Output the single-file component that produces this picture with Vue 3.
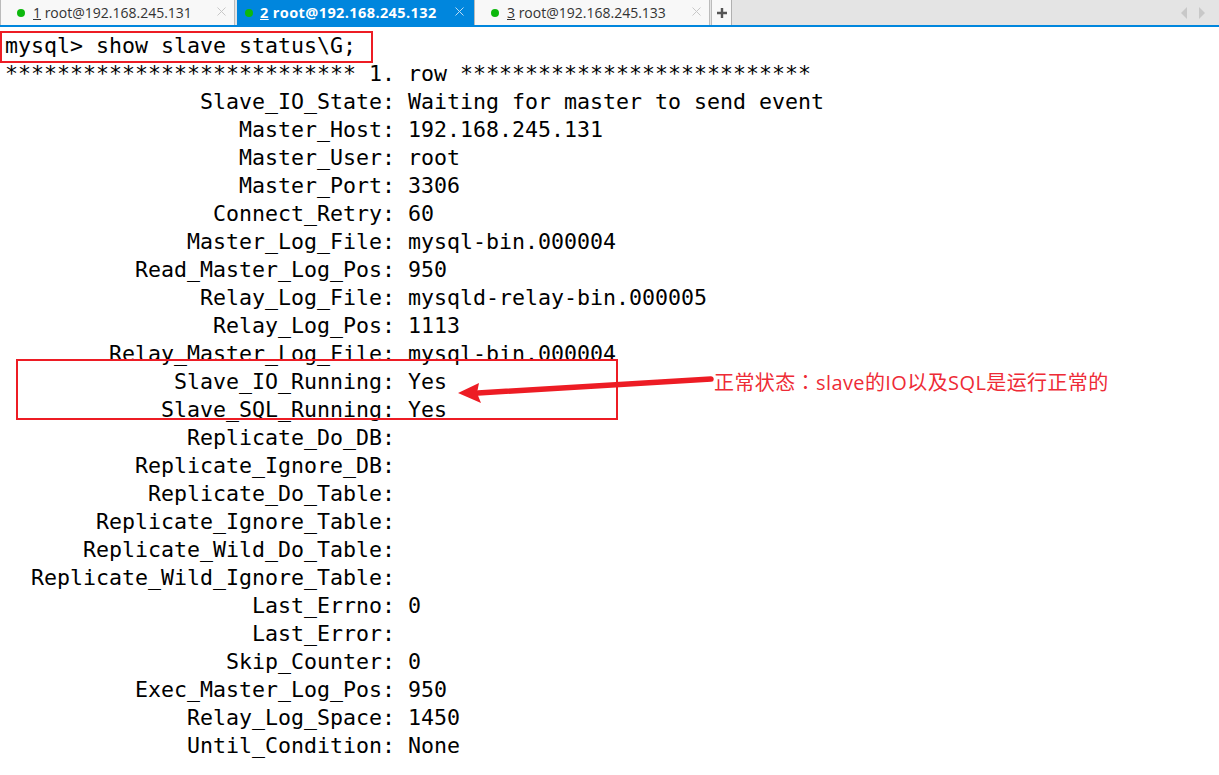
<script setup>
const tabs = [
  { num: '1', host: 'root@192.168.245.131', active: false },
  { num: '2', host: 'root@192.168.245.132', active: true },
  { num: '3', host: 'root@192.168.245.133', active: false }
]
const rows = [
  ['Slave_IO_State', 'Waiting for master to send event'],
  ['Master_Host', '192.168.245.131'],
  ['Master_User', 'root'],
  ['Master_Port', '3306'],
  ['Connect_Retry', '60'],
  ['Master_Log_File', 'mysql-bin.000004'],
  ['Read_Master_Log_Pos', '950'],
  ['Relay_Log_File', 'mysqld-relay-bin.000005'],
  ['Relay_Log_Pos', '1113'],
  ['Relay_Master_Log_File', 'mysql-bin.000004'],
  ['Slave_IO_Running', 'Yes'],
  ['Slave_SQL_Running', 'Yes'],
  ['Replicate_Do_DB', ''],
  ['Replicate_Ignore_DB', ''],
  ['Replicate_Do_Table', ''],
  ['Replicate_Ignore_Table', ''],
  ['Replicate_Wild_Do_Table', ''],
  ['Replicate_Wild_Ignore_Table', ''],
  ['Last_Errno', '0'],
  ['Last_Error', ''],
  ['Skip_Counter', '0'],
  ['Exec_Master_Log_Pos', '950'],
  ['Relay_Log_Space', '1450'],
  ['Until_Condition', 'None']
]
const stars = '*'.repeat(27)
const lines = [
  'mysql> show slave status\\G;',
  `${stars} 1. row ${stars}`,
  ...rows.map(([k, v]) => `${(k + ':').padStart(30)} ${v}`)
]
</script>

<template>
  <div class="screen">
    <div class="tabbar">
      <div v-for="t in tabs" :key="t.num" class="tab" :class="{ active: t.active }">
        <span class="dot"></span>
        <span class="label"><u>{{ t.num }}</u> {{ t.host }}</span>
        <svg class="close" width="9" height="9" viewBox="0 0 9 9"><path d="M0.5 0.5L8.5 8.5M8.5 0.5L0.5 8.5" fill="none" stroke-width="1" /></svg>
      </div>
      <div class="add">
        <svg width="10" height="10" viewBox="0 0 10 10"><path d="M0 5H10M5 0V10" stroke="#555" stroke-width="2.4" fill="none" /></svg>
      </div>
      <div class="nav">
        <svg width="6" height="12" viewBox="0 0 6 12"><path d="M6 0V12L0 6Z" fill="#c8c8c8" /></svg>
        <svg width="6" height="12" viewBox="0 0 6 12"><path d="M0 0V12L6 6Z" fill="#c8c8c8" /></svg>
      </div>
    </div>
    <div class="terminal">
      <div v-for="(l, i) in lines" :key="i" class="line">{{ l }}</div>
      <div class="box box-cmd"></div>
      <div class="box box-run"></div>
      <svg class="arrow" width="260" height="40" viewBox="0 0 260 40">
        <path d="M255 10 L22 24" stroke="#ed1c24" stroke-width="5.5" stroke-linecap="round" fill="none" />
        <path d="M2 24 L23 14 L21 24 L25 34 Z" fill="#ed1c24" />
      </svg>
      <div class="note">正常状态<span class="colon">：</span>slave的IO以及SQL是运行正常的</div>
    </div>
  </div>
</template>

<style scoped>
.screen {
  width: 1219px;
  height: 775px;
  overflow: hidden;
  background: #fff;
  display: flex;
  flex-direction: column;
}
.tabbar {
  height: 25px;
  background: #e4e4e4;
  display: flex;
  align-items: stretch;
  border-bottom: 2px solid #0086dd;
  flex: none;
  box-sizing: content-box;
}
.tab {
  width: 235px;
  background: #f8f8f8;
  border-left: 1px solid #bbb;
  border-right: 1px solid #bbb;
  box-sizing: border-box;
  display: flex;
  align-items: center;
  padding-left: 16px;
  font: 14px "Open Sans", "Liberation Sans", sans-serif;
  color: #333;
  position: relative;
}
.tab:nth-child(3) { width: 236px; }
.tab.active {
  width: 237px;
  margin-left: 2px;
  background: #0086dd;
  color: #fff;
  font-size: 14.5px;
  font-weight: 700;
  letter-spacing: 0.4px;
  padding-left: 8px;
  border: none;
}
.dot {
  width: 8px;
  height: 8px;
  border-radius: 50%;
  background: #0db80d;
  margin-right: 8px;
  flex: none;
}
.active .dot { margin-right: 7px; }
.label { white-space: pre; }
.close {
  position: absolute;
  right: 8px;
  top: 7px;
  stroke: #c8c8c8;
}
.active .close { stroke: #bcdcf4; right: 10px; }
.add {
  width: 21px;
  margin-left: 1px;
  background: #f8f8f8;
  border-left: 1px solid #bbb;
  border-right: 1px solid #b0b0b0;
  box-sizing: border-box;
  display: flex;
  align-items: center;
  justify-content: center;
}
.nav {
  margin-left: auto;
  width: 24px;
  margin-right: 14px;
  display: flex;
  justify-content: space-between;
  align-items: center;
}
.terminal {
  position: relative;
  flex: 1;
  padding: 5px 0 0 5px;
  font-family: "DejaVu Sans Mono", monospace;
  font-size: 21.6px;
  color: #000;
}
.line {
  height: 28px;
  line-height: 28px;
  white-space: pre;
}
.box {
  position: absolute;
  border: 2px solid #ed1c24;
  box-sizing: border-box;
}
.box-cmd { left: 0; top: 4px; width: 373px; height: 32px; }
.box-run { left: 16px; top: 332px; width: 602px; height: 61px; }
.arrow { position: absolute; left: 456px; top: 342px; }
.note {
  position: absolute;
  left: 714px;
  top: 341px;
  font: 20px/28px "Open Sans", "Noto Sans CJK SC", sans-serif;
  letter-spacing: 0.4px;
  color: #ee2b36;
  white-space: nowrap;
}
.colon { font-family: "Noto Sans CJK TC", sans-serif; }
</style>
